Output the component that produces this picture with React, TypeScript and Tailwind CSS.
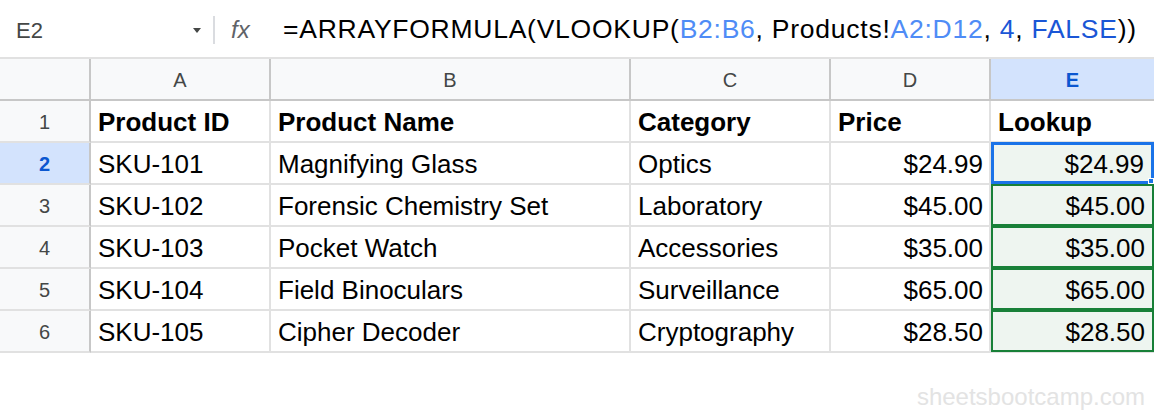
import React from "react";

const cols = ["A", "B", "C", "D", "E"];

const rows = [
  ["SKU-101", "Magnifying Glass", "Optics", "$24.99", "$24.99"],
  ["SKU-102", "Forensic Chemistry Set", "Laboratory", "$45.00", "$45.00"],
  ["SKU-103", "Pocket Watch", "Accessories", "$35.00", "$35.00"],
  ["SKU-104", "Field Binoculars", "Surveillance", "$65.00", "$65.00"],
  ["SKU-105", "Cipher Decoder", "Cryptography", "$28.50", "$28.50"],
];

const headers = ["Product ID", "Product Name", "Category", "Price", "Lookup"];

export default function App() {
  return (
    <div
      className="w-[1154px] h-[414px] bg-white overflow-hidden text-black"
      style={{ fontFamily: '"Liberation Sans", Arial, sans-serif' }}
    >
      {/* formula bar */}
      <div className="h-[59px] flex items-center border-b-2 border-[#e1e1e1] pt-[3px]">
        <div className="w-[213px] flex items-center justify-between pl-4 pr-[12px]">
          <span className="text-[22px] text-[#444746]">E2</span>
          <span className="w-0 h-0 border-l-[4px] border-r-[4px] border-t-[5px] border-l-transparent border-r-transparent border-t-[#444746]" />
        </div>
        <div className="w-[2px] h-[28px] bg-[#dadce0]" />
        <span className="ml-[16px] w-[52px] text-[24px] italic text-[#5f6368]">fx</span>
        <div className="text-[26.5px] whitespace-nowrap tracking-[0.75px]">
          =ARRAYFORMULA(VLOOKUP(<span className="text-[#4f8cf6]">B2:B6</span>, Products!
          <span className="text-[#4f8cf6]">A2:D12</span>, <span className="text-[#1a56d6]">4</span>,{" "}
          <span className="text-[#1a56d6]">FALSE</span>))
        </div>
      </div>

      {/* grid */}
      <div className="grid grid-cols-[91px_180px_360px_200px_160px_163px]">
        <div className="h-[42px] bg-[#f8f9fa] border-r-2 border-b-2 border-[#c7c7c7]" />
        {cols.map((c) => (
          <div
            key={c}
            className={`h-[42px] flex items-center justify-center pt-[2px] text-[20px] border-b-2 border-[#c7c7c7] ${
              c === "E"
                ? "bg-[#d3e3fd] text-[#0b57d0] font-bold"
                : "bg-[#f8f9fa] text-[#444746] border-r-2"
            }`}
          >
            {c}
          </div>
        ))}

        {/* row 1 */}
        <div className="h-[42px] bg-[#f8f9fa] flex items-center justify-center pt-[2px] text-[20px] text-[#444746] border-r-2 border-b-2 border-r-[#c7c7c7] border-b-[#e1e1e1]">
          1
        </div>
        {headers.map((h, i) => (
          <div
            key={h}
            className={`h-[42px] flex items-center pl-[7px] pt-[2px] text-[26px] font-bold border-b-2 border-[#e1e1e1] ${
              i < 4 ? "border-r-2" : ""
            }`}
          >
            {h}
          </div>
        ))}

        {rows.map((r, ri) => {
          const n = ri + 2;
          const sel = n === 2;
          return (
            <React.Fragment key={n}>
              <div
                className={`h-[42px] flex items-center justify-center pt-[2px] text-[20px] border-r-2 border-b-2 border-r-[#c7c7c7] border-b-[#e1e1e1] ${
                  sel ? "bg-[#d3e3fd] text-[#0b57d0] font-bold" : "bg-[#f8f9fa] text-[#444746]"
                }`}
              >
                {n}
              </div>
              {r.slice(0, 4).map((v, ci) => (
                <div
                  key={ci}
                  className={`h-[42px] flex items-center pt-[2px] text-[26px] border-r-2 border-b-2 border-[#e1e1e1] ${
                    ci === 3 ? "justify-end pr-[6px]" : "pl-[7px]"
                  }`}
                >
                  {v}
                </div>
              ))}
              <div className="h-[42px] border-b-2 border-[#e1e1e1]">
                <div
                  className={`relative h-[42px] -mt-[1px] flex items-center justify-end pr-[7px] pt-[2px] text-[26px] bg-[#eef5f0] ${
                    sel ? "border-[3px] border-[#1a73e8]" : "border-2 border-[#188038]"
                  }`}
                >
                  {r[4]}
                  {sel && (
                    <span className="absolute -right-[3px] -bottom-[3px] w-[6px] h-[6px] bg-[#1a73e8] border border-white" />
                  )}
                </div>
              </div>
            </React.Fragment>
          );
        })}
      </div>

      {/* watermark */}
      <div className="flex justify-end pr-[9px] pt-[26px]">
        <span className="text-[24px] text-[#e3e3e3]">sheetsbootcamp.com</span>
      </div>
    </div>
  );
}
